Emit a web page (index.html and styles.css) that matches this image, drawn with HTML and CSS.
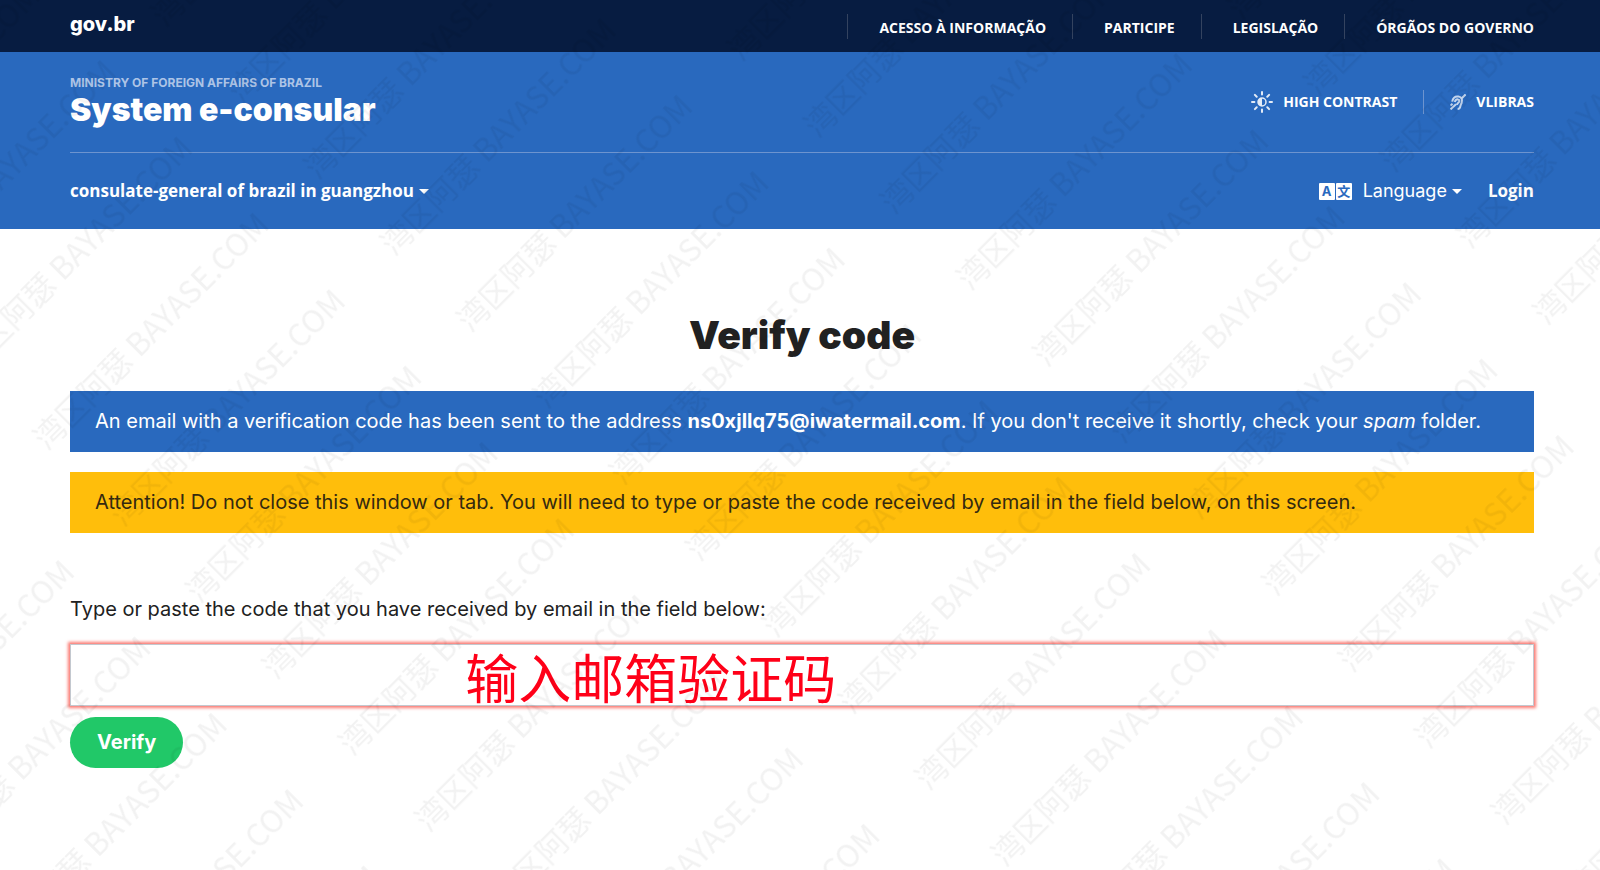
FILE: index.html
```
<!DOCTYPE html>
<html lang="en">

<head>
	<meta charset="utf-8">
	<title>System e-consular</title>
	<link rel="stylesheet" href="styles.css">
</head>

<body>
	<div class="topbar">
		<a class="govbr" href="#">gov.br</a>
		<nav class="topbar-links">
			<a href="#">ACESSO À INFORMAÇÃO</a>
			<a href="#">PARTICIPE</a>
			<a href="#">LEGISLAÇÃO</a>
			<a href="#">ÓRGÃOS DO GOVERNO</a>
		</nav>
	</div>
	<header class="header">
		<div class="header-main">
			<div>
				<div class="ministry">MINISTRY OF FOREIGN AFFAIRS OF BRAZIL</div>
				<div class="system-name">System e-consular</div>
			</div>
			<div class="tools">
				<a class="tool" href="#">
					<svg width="22" height="22" viewBox="0 0 22 22" fill="none" stroke="#e4ecf7" stroke-width="2" stroke-linecap="round">
						<path d="M11 1v2.4M11 18.6V21M1 11h2.4M18.6 11H21M3.9 3.9l1.8 1.8M16.3 16.3l1.8 1.8M3.9 18.1l1.8-1.8M16.3 5.7l1.8-1.8" />
						<circle cx="11" cy="11" r="4" stroke-width="1.5" />
						<path d="M11 7a4 4 0 0 0 0 8z" fill="#e4ecf7" stroke="none" />
					</svg>
					HIGH CONTRAST
				</a>
				<a class="tool" href="#">
					<svg width="16" height="16" viewBox="0 0 16 16" fill="none" stroke="#c3d5ee" stroke-width="2">
						<path d="M15.6.4L11.8 4.2M.5 15.4L6 10.2M.5 11.6l2-1.8" />
						<path d="M2.2 7.6C3 3.8 5.6 2.2 8.4 2.6c3.4.5 4.3 3.2 3.2 6.2-.6 1.6-1 1.8-1.2 3.4-.2 1.8-1.2 2.8-2.8 2.8" />
						<path d="M4.8 8c.4-2 1.8-2.9 3.2-2.6 1.6.3 1.6 1.6 1 2.6-.8 1.2-2 1.2-2 3" />
					</svg>
					VLIBRAS
				</a>
			</div>
		</div>
		<div class="header-menu">
			<button class="menu-btn bold" type="button">consulate-general of brazil in guangzhou <i class="caret"></i></button>
			<div class="user-menu">
				<button class="menu-btn" type="button">
					<span class="lang-icon" aria-hidden="true"><b>A</b><b>文</b></span>
					Language <i class="caret"></i>
				</button>
				<a class="login" href="#">Login</a>
			</div>
		</div>
	</header>
	<main class="content">
		<h1>Verify code</h1>
		<div class="alert alert-info">An email with a verification code has been sent to the address <b>ns0xjllq75@iwatermail.com</b>. If you don't receive it shortly, check your <em>spam</em> folder.</div>
		<div class="alert alert-warning">Attention! Do not close this window or tab. You will need to type or paste the code received by email in the field below, on this screen.</div>
		<form>
			<label for="code">Type or paste the code that you have received by email in the field below:</label>
			<div class="code-field">
				<input id="code" type="text">
				<span class="note" lang="zh">输入邮箱验证码</span>
			</div>
			<button class="verify" type="button">Verify</button>
		</form>
	</main>
	<svg class="watermark" aria-hidden="true">
		<defs>
			<pattern id="mark" width="383" height="108" patternUnits="userSpaceOnUse" patternTransform="translate(20 427) rotate(-45)">
				<text x="2" y="36">湾区阿瑟 BAYASE.COM</text>
			</pattern>
		</defs>
		<rect width="100%" height="100%" fill="url(#mark)" />
	</svg>
</body>

</html>
```
FILE: styles.css
```
* {
	box-sizing: border-box;
}

body {
	margin: 0;
	color: #212121;
	background: #fff;
	font-family: Inter, "Noto Sans CJK SC", sans-serif;
	font-size: 20px;
	line-height: 30px;
}

a {
	color: inherit;
	text-decoration: none;
}

button {
	font: inherit;
	color: inherit;
	background: none;
	border: 0;
	padding: 0;
}

.topbar,
.header,
.content {
	padding: 0 66px 0 70px;
}

.topbar {
	display: flex;
	justify-content: space-between;
	height: 52px;
	padding-top: 14px;
	background: #071c41;
	color: #fff;
}

.govbr {
	font-size: 20px;
	font-weight: 800;
	line-height: 20px;
}

.topbar-links {
	display: flex;
	font-family: "Open Sans", sans-serif;
	font-size: 14px;
	font-weight: 700;
	line-height: 28px;
}

.topbar-links a {
	height: 25px;
	padding: 0 26px 0 31px;
	border-left: 1px solid #34435f;
}

.topbar-links a:last-child,
.tool:last-child {
	padding-right: 0;
}

.header {
	background: #2969be;
	color: #fff;
}

.header-main {
	display: flex;
	justify-content: space-between;
	height: 101px;
	padding-top: 21px;
	border-bottom: 1px solid #6d94cf;
}

.ministry {
	color: #adc4e6;
	font-size: 12px;
	font-weight: 700;
	line-height: 20px;
}

.system-name {
	font-size: 32px;
	font-weight: 900;
	line-height: 34px;
}

.tools {
	display: flex;
	align-items: center;
	height: 24px;
	margin-top: 17px;
	font-family: "Open Sans", sans-serif;
	font-size: 14px;
	font-weight: 700;
	line-height: 24px;
}

.tool {
	display: flex;
	align-items: center;
	gap: 10px;
	padding: 0 26px;
}

.tool + .tool {
	border-left: 1px solid #6d94cf;
}

.header-menu {
	display: flex;
	justify-content: space-between;
	align-items: center;
	height: 76px;
}

.menu-btn {
	display: flex;
	align-items: center;
	font-size: 18px;
}

.bold,
.login {
	font-family: "Open Sans", sans-serif;
	font-size: 17px;
	font-weight: 700;
}

.caret {
	margin-left: 5px;
	border: 5px solid transparent;
	border-top-color: #fff;
	border-bottom: 0;
}

.user-menu {
	display: flex;
	gap: 26px;
}

.lang-icon {
	display: flex;
	gap: 1px;
	margin-right: 11px;
	color: #2969be;
	font-size: 13px;
	line-height: 17px;
}

.lang-icon b {
	width: 16px;
	height: 17px;
	border-radius: 1px;
	background: #fff;
	text-align: center;
}

h1 {
	margin: 0;
	padding: 81px 0 31px;
	font-size: 39px;
	font-weight: 900;
	line-height: 50px;
	text-align: center;
}

.alert {
	margin-bottom: 20px;
	padding: 15px 25px 16px;
}

.alert-info {
	background: #2969be;
	color: #fff;
}

.alert-warning {
	background: #ffbe0b;
	color: #342a10;
}

label {
	display: block;
	padding: 41px 0 20px;
}

.code-field {
	position: relative;
}

input {
	display: block;
	width: 100%;
	height: 62px;
	padding: 0 20px;
	border: 1px solid #c3c8cf;
	border-radius: 0;
	background: #fff;
	box-shadow: 0 0 3px 2px #fb7a72;
	font: inherit;
}

/* hint laid over the field */
.note {
	position: absolute;
	left: 27%;
	top: 0;
	color: #ff0018;
	font-family: "Noto Sans CJK SC", sans-serif;
	font-size: 53px;
	line-height: 64px;
	pointer-events: none;
}

.verify {
	margin-top: 11px;
	padding: 10px 27px 11px;
	border-radius: 26px;
	background: #21c868;
	color: #fff;
	font-weight: 700;
}

.watermark {
	position: fixed;
	left: 0;
	top: 0;
	width: 100%;
	height: 100%;
	pointer-events: none;
}

.watermark text {
	fill: #000;
	fill-opacity: 0.05;
	font-family: "Noto Sans CJK SC", sans-serif;
	font-size: 31px;
}
```
